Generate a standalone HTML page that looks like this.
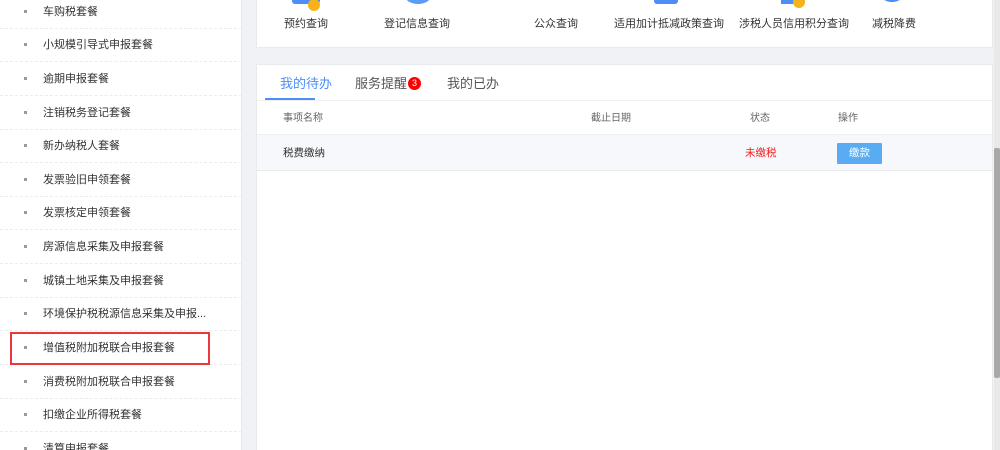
<!DOCTYPE html>
<html style="overflow:hidden;height:450px"><head><meta charset="utf-8">
<style>
*{margin:0;padding:0;box-sizing:border-box}
body{width:1000px;height:450px;overflow:hidden;background:#f0f2f5;font-family:"Liberation Sans","Noto Sans CJK SC",sans-serif;position:relative;color:#333}
.side{position:absolute;left:0;top:0;width:242px;height:450px;background:#fff;border-right:1px solid #e8e8e8}
.item{position:absolute;left:0;width:242px;height:34px;font-size:11px;line-height:34px;color:#333;border-bottom:1px dashed #ececec}
.item i{position:absolute;left:24px;top:15px;width:3px;height:3px;background:#999}
.item span{position:absolute;left:43px}
.redbox{position:absolute;left:10px;top:332px;width:200px;height:33px;border:2px solid #e8383d}
.card1{position:absolute;left:256px;top:-5px;width:737px;height:53px;background:#fff;border:1px solid #e8eaee}
.lbl{position:absolute;top:19px;font-size:11px;color:#333;transform:translateX(-50%);white-space:nowrap}
.ic{position:absolute;top:-12px;background:#4d8ef5}
.card2{position:absolute;left:256px;top:64px;width:737px;height:386px;background:#fff;border:1px solid #e8eaee;border-bottom:none;overflow:hidden}
.tab{position:absolute;top:8px;font-size:13px;color:#555}
.tabline{position:absolute;left:8px;top:33px;width:50px;height:2px;background:#4d8ef5}
.hdr{position:absolute;left:0;top:35px;width:100%;height:35px;border-top:1px solid #f0f0f0;border-bottom:1px solid #eef0f2;font-size:10px;color:#666}
.row{position:absolute;left:0;top:70px;width:100%;height:36px;background:#f7f8fb;border-bottom:1px solid #e8eaee;font-size:10.5px}
.c{position:absolute;top:1px;line-height:34px}
.btn{position:absolute;left:580px;top:8px;width:45px;height:21px;background:#5aacf2;color:#fff;font-size:10.5px;text-align:center;line-height:21px;border-radius:1px}
.badge{display:inline-block;width:13px;height:13px;border-radius:50%;background:#f00;color:#fff;font-size:9px;line-height:13px;text-align:center;vertical-align:2px;margin-left:1px}
.sb{position:absolute;left:994px;top:0;width:6px;height:450px;background:#e9e9e9}
.th{position:absolute;left:994px;top:148px;width:6px;height:230px;background:#a8a8a8;border-radius:2px}
</style></head><body>
<div class="side">
<div class="item" style="top:-5px"><i></i><span>车购税套餐</span></div>
<div class="item" style="top:28px"><i></i><span>小规模引导式申报套餐</span></div>
<div class="item" style="top:62px"><i></i><span>逾期申报套餐</span></div>
<div class="item" style="top:96px"><i></i><span>注销税务登记套餐</span></div>
<div class="item" style="top:129px"><i></i><span>新办纳税人套餐</span></div>
<div class="item" style="top:163px"><i></i><span>发票验旧申领套餐</span></div>
<div class="item" style="top:196px"><i></i><span>发票核定申领套餐</span></div>
<div class="item" style="top:230px"><i></i><span>房源信息采集及申报套餐</span></div>
<div class="item" style="top:264px"><i></i><span>城镇土地采集及申报套餐</span></div>
<div class="item" style="top:297px"><i></i><span>环境保护税税源信息采集及申报...</span></div>
<div class="item" style="top:331px"><i></i><span>增值税附加税联合申报套餐</span></div>
<div class="item" style="top:365px"><i></i><span>消费税附加税联合申报套餐</span></div>
<div class="item" style="top:398px"><i></i><span>扣缴企业所得税套餐</span></div>
<div class="item" style="top:432px"><i></i><span>清算申报套餐</span></div>
<div class="redbox"></div>
</div>
<div class="card1">
<div class="ic" style="left:35px;width:28px;height:20px;border-radius:3px"></div>
<div class="ic" style="left:51px;top:3px;width:12px;height:12px;border-radius:50%;background:#f5b21b"></div>
<div class="ic" style="left:147px;width:28px;height:20px;border-radius:50%;background:#5a9cf7"></div>
<div class="ic" style="left:285px;width:26px;height:16px;border-radius:2px"></div>
<div class="ic" style="left:397px;width:24px;height:20px;border-radius:3px"></div>
<div class="ic" style="left:524px;top:-8px;width:20px;height:16px;border-radius:10px 10px 0 0"></div>
<div class="ic" style="left:536px;top:0px;width:12px;height:12px;border-radius:50%;background:#f5b21b"></div>
<div class="ic" style="left:622px;top:-14px;width:26px;height:20px;border-radius:50%;background:#fff;border:2px solid #4d8ef5"></div>
<div class="lbl" style="left:49px">预约查询</div>
<div class="lbl" style="left:160px">登记信息查询</div>
<div class="lbl" style="left:299px">公众查询</div>
<div class="lbl" style="left:412px">适用加计抵减政策查询</div>
<div class="lbl" style="left:537px">涉税人员信用积分查询</div>
<div class="lbl" style="left:637px">减税降费</div>
</div>
<div class="card2">
<div class="tab" style="left:23px;color:#4d8ef5">我的待办</div>
<div class="tab" style="left:98px">服务提醒<span class="badge">3</span></div>
<div class="tab" style="left:190px">我的已办</div>
<div class="tabline"></div>
<div class="hdr">
<div class="c" style="left:26px">事项名称</div>
<div class="c" style="left:334px">截止日期</div>
<div class="c" style="left:493px">状态</div>
<div class="c" style="left:581px">操作</div>
</div>
<div class="row">
<div class="c" style="left:26px">税费缴纳</div>
<div class="c" style="left:488px;color:#f02020">未缴税</div>
<div class="btn">缴款</div>
</div>
</div>
<div class="sb"></div><div class="th"></div>
</body></html>
